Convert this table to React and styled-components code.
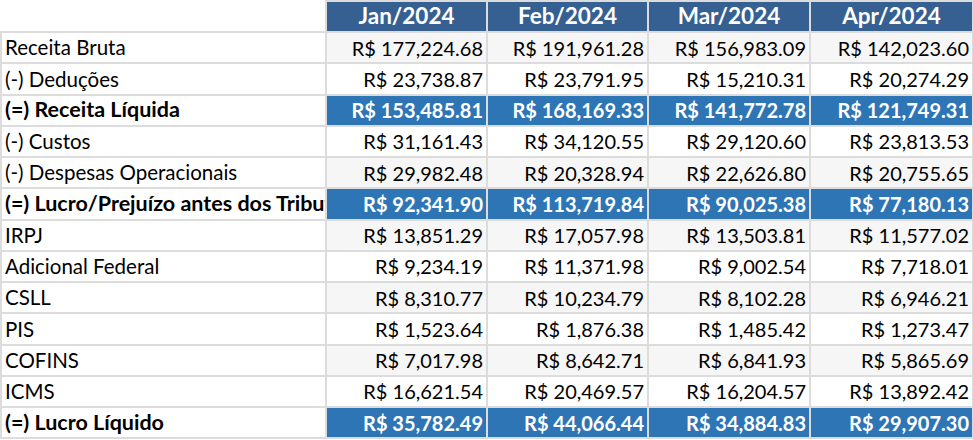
import React from "react";
import styled, { createGlobalStyle } from "styled-components";

const Global = createGlobalStyle`
  html, body { margin: 0; padding: 0; background: #ffffff; }
  body { font-family: Lato, "Liberation Sans", sans-serif; }
`;

const Table = styled.table`
  border-collapse: collapse;
  table-layout: fixed;
  width: 972px;
  font-family: Lato, "Liberation Sans", sans-serif;
  color: #000;
`;

const Col = styled.col`
  width: ${(p) => p.$w}px;
`;

const HeadCell = styled.th`
  height: 29px;
  padding: 0 3px;
  background: ${(p) => (p.$blank ? "#ffffff" : "#366092")};
  color: #ffffff;
  font-weight: 700;
  font-size: 22.5px;
  line-height: 1;
  text-align: center;
  border: 2px solid #dcdcdc;
  ${(p) => (p.$blank ? "border-top: none; border-left: none;" : "")}
`;

const Row = styled.tr`
  &:nth-child(odd) td + td {
    background: #f6f6f6;
  }
  ${(p) =>
    p.$total
      ? `
    && td + td { background: #2e75b6; color: #ffffff; }
  `
      : ""}
`;

const Label = styled.td`
  height: 29.25px;
  padding: 0 3px;
  background: #ffffff;
  border: 2px solid #dcdcdc;
  white-space: nowrap;
  overflow: hidden;
  font-size: ${(p) => (p.$total ? 21.5 : 20.5)}px;
  line-height: 1;
  font-weight: ${(p) => (p.$total ? 700 : 400)};
`;

const Value = styled.td`
  height: 29.25px;
  padding: 0 3px;
  background: #ffffff;
  border: 2px solid #dcdcdc;
  text-align: right;
  white-space: nowrap;
  font-size: 20px;
  line-height: 1;
  font-weight: ${(p) => (p.$total ? 700 : 400)};
`;

const months = ["Jan/2024", "Feb/2024", "Mar/2024", "Apr/2024"];
const widths = [325, 161, 161, 162, 163];

const rows = [
  ["Receita Bruta", ["177,224.68", "191,961.28", "156,983.09", "142,023.60"]],
  ["(-) Deduções", ["23,738.87", "23,791.95", "15,210.31", "20,274.29"]],
  ["(=) Receita Líquida", ["153,485.81", "168,169.33", "141,772.78", "121,749.31"], true],
  ["(-) Custos", ["31,161.43", "34,120.55", "29,120.60", "23,813.53"]],
  ["(-) Despesas Operacionais", ["29,982.48", "20,328.94", "22,626.80", "20,755.65"]],
  ["(=) Lucro/Prejuízo antes dos Tributos", ["92,341.90", "113,719.84", "90,025.38", "77,180.13"], true],
  ["IRPJ", ["13,851.29", "17,057.98", "13,503.81", "11,577.02"]],
  ["Adicional Federal", ["9,234.19", "11,371.98", "9,002.54", "7,718.01"]],
  ["CSLL", ["8,310.77", "10,234.79", "8,102.28", "6,946.21"]],
  ["PIS", ["1,523.64", "1,876.38", "1,485.42", "1,273.47"]],
  ["COFINS", ["7,017.98", "8,642.71", "6,841.93", "5,865.69"]],
  ["ICMS", ["16,621.54", "20,469.57", "16,204.57", "13,892.42"]],
  ["(=) Lucro Líquido", ["35,782.49", "44,066.44", "34,884.83", "29,907.30"], true],
];

export default function App() {
  return (
    <>
      <Global />
      <Table>
        <colgroup>
          {widths.map((w, i) => (
            <Col key={i} $w={w} />
          ))}
        </colgroup>
        <thead>
          <tr>
            <HeadCell $blank />
            {months.map((m) => (
              <HeadCell key={m}>{m}</HeadCell>
            ))}
          </tr>
        </thead>
        <tbody>
          {rows.map(([label, vals, total]) => (
            <Row key={label} $total={total}>
              <Label $total={total}>{label}</Label>
              {vals.map((v, i) => (
                <Value key={i} $total={total}>
                  R$ {v}
                </Value>
              ))}
            </Row>
          ))}
        </tbody>
      </Table>
    </>
  );
}
